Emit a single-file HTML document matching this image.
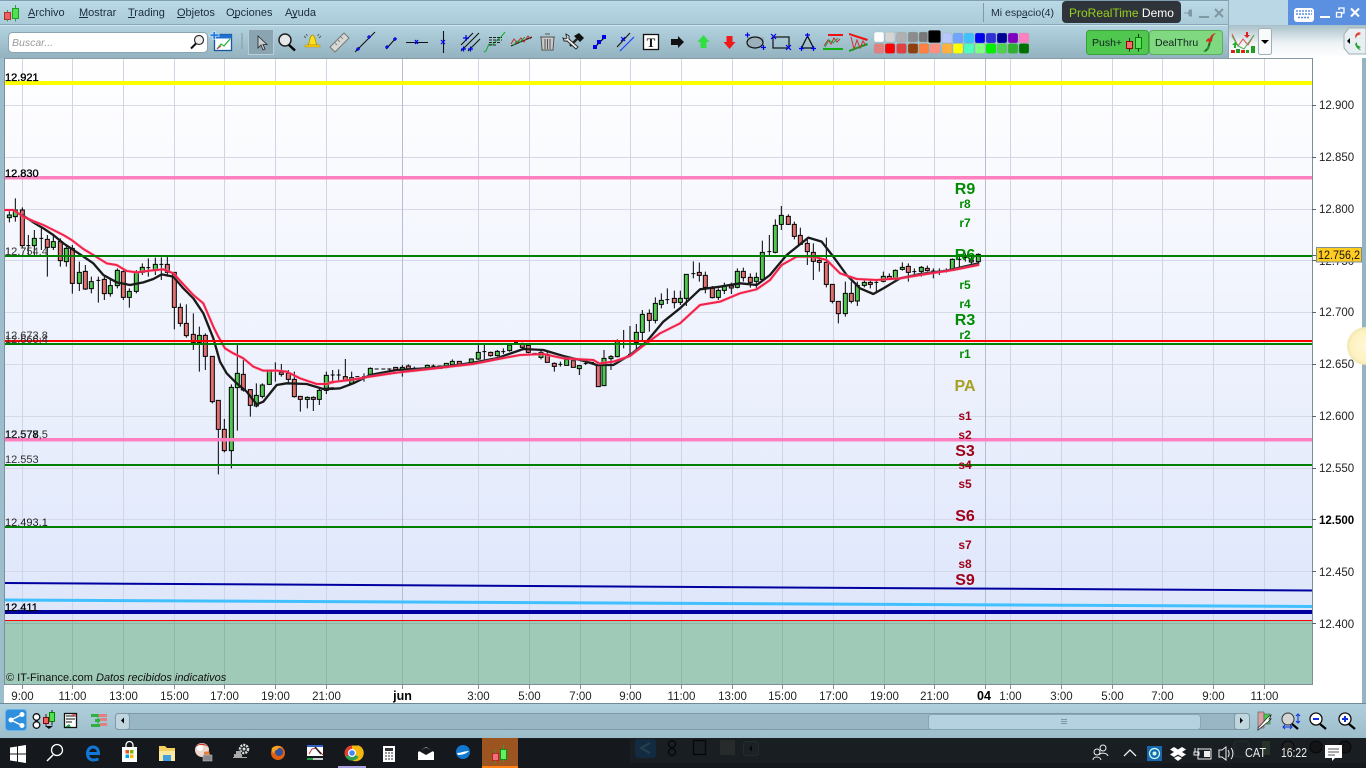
<!DOCTYPE html>
<html><head><meta charset="utf-8"><title>ProRealTime</title>
<style>
html,body{margin:0;padding:0;background:#15191e;overflow:hidden}
svg{display:block;position:absolute;left:0;top:0}
text{font-family:"Liberation Sans",sans-serif}
</style></head><body>
<svg width="1366" height="768" viewBox="0 0 1366 768" xmlns="http://www.w3.org/2000/svg">
<defs>
<linearGradient id="chart" x1="0" y1="0" x2="0" y2="1"><stop offset="0" stop-color="#ffffff"/><stop offset="1" stop-color="#dee6fb"/></linearGradient>
<linearGradient id="bar1" x1="0" y1="0" x2="0" y2="1"><stop offset="0" stop-color="#bcdae7"/><stop offset="1" stop-color="#a9cad8"/></linearGradient>
<linearGradient id="bar2" x1="0" y1="0" x2="0" y2="1"><stop offset="0" stop-color="#b5d4e1"/><stop offset="1" stop-color="#93b3c1"/></linearGradient>
<linearGradient id="bar3" x1="0" y1="0" x2="0" y2="1"><stop offset="0" stop-color="#b0d0dd"/><stop offset="1" stop-color="#9dbdcb"/></linearGradient>
<linearGradient id="white2" x1="0" y1="0" x2="0" y2="1"><stop offset="0" stop-color="#a8c0ca"/><stop offset=".55" stop-color="#eef3f5"/><stop offset="1" stop-color="#ffffff"/></linearGradient>
<radialGradient id="orb"><stop offset="0" stop-color="#fff8d8"/><stop offset=".8" stop-color="#fdf2c0"/><stop offset="1" stop-color="#f0e6b0"/></radialGradient>
</defs>

<!-- window frame -->
<rect x="0" y="0" width="1366" height="738" fill="#a5c6d4"/>
<rect x="0" y="0" width="1229" height="25" fill="url(#bar1)"/>
<rect x="0" y="0" width="1366" height="1" fill="#7f9fb0"/>
<rect x="1229" y="0" width="60" height="25" fill="#b9d7e4"/>
<rect x="1288" y="0" width="78" height="25" fill="#5b8fe0"/>
<rect x="1229" y="25" width="137" height="33" fill="url(#white2)"/>
<rect x="0" y="25" width="1229" height="33" fill="url(#bar2)"/>
<rect x="0" y="24" width="1229" height="1" fill="#88a8b8"/>
<rect x="0" y="25" width="1229" height="1" fill="#d0e6ef"/>
<rect x="1228" y="0" width="1" height="59" fill="#8fa6b2"/>

<!-- chart bg -->
<rect x="0" y="58" width="4" height="646" fill="#9cbecc"/>
<rect x="4" y="58" width="1308" height="563" fill="url(#chart)"/>
<rect x="4" y="621" width="1308" height="63" fill="#a0cab8"/>
<rect x="1312" y="58" width="50" height="646" fill="#ffffff"/>
<rect x="1362" y="58" width="4" height="646" fill="#94b4c3"/>
<rect x="4" y="684" width="1358" height="19" fill="#fff"/>
<rect x="4" y="58" width="1308" height="1" fill="#8a9aa5"/>
<rect x="4" y="58" width="1" height="627" fill="#7d8f9b"/>
<rect x="1312" y="58" width="1" height="627" fill="#7d8f9b"/>
<rect x="4" y="684" width="1308" height="1" fill="#7d8f9b"/>

<!-- grid -->
<g stroke="#d6dae8" stroke-width="1" fill="none">
<path d="M5 105.500H1312M5 157.500H1312M5 209.500H1312M5 260.500H1312M5 312.500H1312M5 364.500H1312M5 416.500H1312M5 468.500H1312M5 519.500H1312M5 571.500H1312"/>
<path stroke="#d0d5e5" d="M22.500 59V621M72.500 59V621M123.500 59V621M174.500 59V621M224.500 59V621M275.500 59V621M326.500 59V621M478.500 59V621M529.500 59V621M580.500 59V621M630.500 59V621M681.500 59V621M732.500 59V621M782.500 59V621M833.500 59V621M884.500 59V621M934.500 59V621M1010.500 59V621M1061.500 59V621M1112.500 59V621M1162.500 59V621M1213.500 59V621M1264.500 59V621"/>
<path stroke="#b6bdd2" d="M402.500 59V621M985.500 59V621"/>
<path stroke="#8fb6a6" d="M22.500 621V684M72.500 621V684M123.500 621V684M174.500 621V684M224.500 621V684M275.500 621V684M326.500 621V684M402.500 621V684M478.500 621V684M529.500 621V684M580.500 621V684M630.500 621V684M681.500 621V684M732.500 621V684M782.500 621V684M833.500 621V684M884.500 621V684M934.500 621V684M985.500 621V684M1010.500 621V684M1061.500 621V684M1112.500 621V684M1162.500 621V684M1213.500 621V684M1264.500 621V684"/>
<path stroke="#8fb6a6" d="M5 623.500H1312"/>
<path stroke="#7d8f9b" d="M22.500 685V689M72.500 685V689M123.500 685V689M174.500 685V689M224.500 685V689M275.500 685V689M326.500 685V689M402.500 685V689M478.500 685V689M529.500 685V689M580.500 685V689M630.500 685V689M681.500 685V689M732.500 685V689M782.500 685V689M833.500 685V689M884.500 685V689M934.500 685V689M985.500 685V689M1010.500 685V689M1061.500 685V689M1112.500 685V689M1162.500 685V689M1213.500 685V689M1264.500 685V689"/>
<path stroke="#55656f" d="M1312 105.500h4M1312 157.500h4M1312 209.500h4M1312 260.500h4M1312 312.500h4M1312 364.500h4M1312 416.500h4M1312 468.500h4M1312 519.500h4M1312 571.500h4M1312 623.500h4M1312 255.500h4"/>
</g>

<!-- Candles part 1 -->
<g transform="translate(0 195) scale(.33333)" stroke="#000" stroke-width="3" fill="none">
<path d="M28 42V82M46 10V80M67 37V160M85 120V180M79 152h12M103 105V180M124 100V165M118 130h12M142 120V245M160 120V165M181 130V215M199 150V215M217 150V296M238 200V288M256 210V285M274 245V295M295 245V323M289 256h12M313 245V315M331 250V305M352 220V280M370 225V315M388 280V338M409 225V295M427 205V240M445 190V245M439 218h12M466 188V240M484 187V255M478 208h12M502 186V245M523 232V403M541 325V395M559 328V428M580 355V465M598 395V530M616 415V525M637 485V625M655 616V838M673 672V772M694 568V820M712 450V707M730 495V590M751 584V665M769 565V637M787 565V610M808 525V570M826 502V560M820 528h12M844 507V545M865 525V568M883 530V608M901 604V650M922 604V640M940 604V648M958 580V630M979 530V597"/>
<path fill="#50c850" d="M22 60h12v8h-12zM40 45h12v20h-12zM97 130h12v22h-12zM154 140h12v17h-12zM193 160h12v40h-12zM232 232h12v33h-12zM268 260h12v21h-12zM325 272h12v24h-12zM346 226h12v46h-12zM382 289h12v18h-12zM403 233h12v56h-12zM421 217h12v15h-12zM460 208h12v16h-12zM592 421h12v21h-12zM688 577h12v190h-12zM706 535h12v43h-12zM763 601h12v32h-12zM781 570h12v34h-12zM802 526h12v42h-12zM916 607h12v6h-12zM952 586h12v27h-12zM973 541h12v45h-12z"/>
<path fill="#e07070" d="M61 45h12v107h-12zM136 133h12v24h-12zM175 140h12v57h-12zM211 160h12v105h-12zM250 229h12v53h-12zM307 253h12v43h-12zM364 230h12v77h-12zM496 208h12v24h-12zM517 232h12v105h-12zM535 337h12v48h-12zM553 385h12v37h-12zM574 418h12v24h-12zM610 421h12v63h-12zM631 484h12v136h-12zM649 616h12v87h-12zM667 703h12v64h-12zM724 538h12v47h-12zM745 584h12v47h-12zM838 532h12v6h-12zM859 535h12v18h-12zM877 553h12v52h-12zM895 604h12v9h-12zM934 607h12v6h-12z"/>
</g>
<!-- Candles part 2 -->
<g transform="translate(330 330) scale(.33333)" stroke="#000" stroke-width="3" fill="none">
<path d="M8 120V155M2 135h12M26 118V155M20 135h12M46 87V155M65 125V162M76 140h12M96 140h12M102 130V155M121 112V140M134 117h12M154 117h12M172 117h12M178 115V122M217 105V140M235 103V122M247 115h12M253 110V120M266 115h12M292 104V120M304 108h12M310 103V115M349 100V115M367 88V108M388 94V110M399 104h12M424 85V104M445 45V90M457 65h12M463 45V88M482 65V80M502 60V80M514 65h12M520 55V72M539 45V65M552 38h12M577 38V55M595 42V70M608 70h12M633 60V88M652 65V97M673 97V125M685 103h12M691 95V110M748 105V135M761 100h12M767 95V105M780 97h12M805 95V170"/>
<path fill="#50c850" d="M59 143h12v17h-12zM115 115h12v23h-12zM211 112h12v10h-12zM286 106h12v10h-12zM324 108h12v7h-12zM343 100h12v12h-12zM361 94h12v10h-12zM418 87h12v15h-12zM439 67h12v20h-12zM496 64h12v13h-12zM533 45h12v17h-12zM627 67h12v15h-12zM704 89h12v17h-12zM742 107h12v9h-12z"/>
<path fill="#e07070" d="M40 140h12v12h-12zM191 112h12v9h-12zM229 108h12v11h-12zM382 94h12v12h-12zM476 67h12v10h-12zM571 43h12v9h-12zM589 46h12v21h-12zM646 73h12v24h-12zM667 100h12v9h-12zM724 92h12v20h-12zM799 107h12v63h-12z"/>
</g>
<!-- Candles part 3 -->
<g transform="translate(600 200) scale(.33333)" stroke="#000" stroke-width="3" fill="none">
<path d="M12 450V558M33 465V510M52 418V472M71 390V445M90 378V470M84 463h12M109 372V452M127 330V425M148 328V395M166 292V370M184 280V325M202 265V312M196 299h12M223 272V325M241 272V315M259 222V318M280 184V235M274 221h12M298 188V245M316 215V280M337 258V295M355 265V300M373 248V282M394 248V282M412 205V265M430 203V245M451 220V263M469 218V265M487 122V240M508 105V170M502 155h12M526 58V160M544 18V90M565 43V75M583 65V118M601 83V135M622 118V195M640 130V240M658 165V215M679 113V262M697 253V310M715 304V370M736 245V350M754 245V310M772 245V318M793 237V262M811 237V265M829 240V280M823 247h12M850 215V247M868 220V240M886 208V240M907 187V212M925 190V245M943 205V230M937 215h12M964 198V230M982 197V215M1000 205V235M994 213h12M1018 205V225M1012 213h12M1039 205V218M1033 211h12M1057 175V210M1078 165V205M1072 178h12M1096 160V185M1090 172h12M1114 165V195M1135 160V190"/>
<path fill="#50c850" d="M6 475h12v82h-12zM27 470h12v6h-12zM46 425h12v45h-12zM103 397h12v30h-12zM121 343h12v54h-12zM160 310h12v51h-12zM178 301h12v12h-12zM235 295h12v12h-12zM253 223h12v72h-12zM349 271h12v21h-12zM367 258h12v13h-12zM406 214h12v48h-12zM463 232h12v12h-12zM481 157h12v81h-12zM520 76h12v81h-12zM538 46h12v27h-12zM730 280h12v61h-12zM766 256h12v47h-12zM787 247h12v9h-12zM844 229h12v15h-12zM880 211h12v24h-12zM901 202h12v6h-12zM958 202h12v12h-12zM1051 178h12v30h-12zM1108 180h12v6h-12zM1129 163h12v22h-12z"/>
<path fill="#e07070" d="M142 340h12v21h-12zM217 295h12v13h-12zM292 217h12v9h-12zM310 226h12v36h-12zM331 265h12v28h-12zM388 258h12v6h-12zM424 214h12v19h-12zM445 232h12v15h-12zM559 49h12v24h-12zM577 73h12v36h-12zM595 106h12v27h-12zM616 130h12v25h-12zM634 157h12v27h-12zM652 181h12v6h-12zM673 187h12v66h-12zM691 253h12v51h-12zM709 304h12v37h-12zM748 280h12v24h-12zM805 247h12v6h-12zM862 229h12v9h-12zM919 199h12v18h-12zM976 205h12v7h-12z"/>
</g>

<!-- Moving averages -->
<g fill="none" stroke-linejoin="round" stroke-linecap="round" stroke-width="6">
<g transform="translate(0 195) scale(.33333)">
<polyline stroke="#1a1a1a" stroke-width="7" points="67,60 100,82 130,100 160,120 190,145 240,178 280,205 310,240 350,262 390,270 430,262 460,252 485,238 520,245 550,280 580,310 610,355 640,430 660,500 680,535 710,565 740,590 770,628 790,620 830,570 860,565 920,567 970,582 1000,580"/>
<polyline stroke="#f8a0b0" stroke-width="10" opacity=".4" points="15,45 40,45 70,65 100,78 130,90 160,105 190,120 215,135 250,162 285,183 320,205 350,210 380,228 410,232 450,227 490,223 520,235 550,268 580,300 610,325 640,395 655,425 675,460 700,475 730,490 760,515 790,527 830,527 860,530 900,550 950,567 980,567 1000,562"/>
<polyline stroke="#f5204a" points="15,45 40,45 70,65 100,78 130,90 160,105 190,120 215,135 250,162 285,183 320,205 350,210 380,228 410,232 450,227 490,223 520,235 550,268 580,300 610,325 640,395 655,425 675,460 700,475 730,490 760,515 790,527 830,527 860,530 900,550 950,567 980,567 1000,562"/>
</g>
<g transform="translate(330 330) scale(.33333)">
<polyline stroke="#1a1a1a" stroke-width="7" points="0,177 30,175 70,160 120,135 200,120 290,115 360,108 430,98 500,85 580,57 640,60 700,78 770,95 800,105 810,105"/>
<polyline stroke="#f8a0b0" stroke-width="10" opacity=".4" points="0,157 60,150 120,140 200,128 290,118 360,110 430,102 500,88 570,75 640,72 700,85 790,90 810,102"/>
<polyline stroke="#f5204a" points="0,157 60,150 120,140 200,128 290,118 360,110 430,102 500,88 570,75 640,72 700,85 790,90 810,102"/>
</g>
<g transform="translate(600 200) scale(.33333)">
<polyline stroke="#1a1a1a" stroke-width="7" points="0,495 40,495 90,465 140,425 190,365 240,325 300,268 360,260 420,250 470,255 510,225 560,165 625,113 665,125 700,170 740,225 780,265 820,282 850,265 900,235 960,222 1040,212 1135,190"/>
<polyline stroke="#f8a0b0" stroke-width="10" opacity=".4" points="0,490 40,485 90,468 130,437 180,400 240,370 300,315 360,305 420,280 470,268 510,240 545,195 590,170 640,170 680,180 720,220 770,237 830,240 900,235 980,222 1060,210 1135,195"/>
<polyline stroke="#f5204a" points="0,490 40,485 90,468 130,437 180,400 240,370 300,315 360,305 420,280 470,268 510,240 545,195 590,170 640,170 680,180 720,220 770,237 830,240 900,235 980,222 1060,210 1135,195"/>
</g>
</g>

<!-- Horizontal levels -->
<rect x="5" y="81" width="1307" height="4" fill="#ffff00"/>
<rect x="5" y="176" width="1307" height="3.500" fill="#ff80c0"/>
<rect x="5" y="255" width="1307" height="2" fill="#008000"/>
<rect x="5" y="340" width="1307" height="2" fill="#ff0000"/>
<rect x="5" y="343" width="1307" height="2" fill="#008000"/>
<rect x="5" y="438" width="1307" height="3.500" fill="#ff80c0"/>
<rect x="5" y="464" width="1307" height="2" fill="#008000"/>
<rect x="5" y="526" width="1307" height="2" fill="#008000"/>
<line x1="5" y1="583" x2="1312" y2="590.500" stroke="#0000a0" stroke-width="2"/>
<line x1="5" y1="600" x2="1312" y2="606.500" stroke="#40c0ff" stroke-width="3"/>
<rect x="5" y="610" width="1307" height="4" fill="#0000a0"/>
<rect x="5" y="620" width="1307" height="1" fill="#ff0000"/>

<!-- level labels left -->
<g font-size="11" fill="#222">
<text x="5" y="81" stroke="#000" stroke-width=".35" fill="#000">12.921</text>
<text x="5" y="177" stroke="#000" stroke-width=".35" fill="#000">12.830</text>
<text x="5" y="255" fill="#444">12.754,4</text>
<text x="5" y="255" fill="#444">12.7</text>
<text x="5" y="339" fill="#333">12.673,8</text>
<text x="5" y="343" fill="#333">12.666,4</text>
<text x="5" y="438" stroke="#000" stroke-width=".3" fill="#000">12.578</text>
<text x="5" y="438" fill="#333">12.577,5</text>
<text x="5" y="463" fill="#333">12.553</text>
<text x="5" y="526" fill="#222">12.493,1</text>
<text x="5" y="611" fill="#000" stroke="#000" stroke-width=".3">12.411</text>
</g>

<!-- Pivot labels -->
<g text-anchor="middle" font-weight="bold" font-size="12">
<g fill="#008c00">
<text x="965" y="194" font-size="16">R9</text>
<text x="965" y="208">r8</text>
<text x="965" y="227">r7</text>
<text x="965" y="260" font-size="16">R6</text>
<text x="965" y="289">r5</text>
<text x="965" y="308">r4</text>
<text x="965" y="325" font-size="16">R3</text>
<text x="965" y="339">r2</text>
<text x="965" y="358">r1</text>
</g>
<text x="965" y="391" font-size="16" fill="#a8a020">PA</text>
<g fill="#a00018">
<text x="965" y="420">s1</text>
<text x="965" y="439">s2</text>
<text x="965" y="456" font-size="16">S3</text>
<text x="965" y="469">s4</text>
<text x="965" y="488">s5</text>
<text x="965" y="521" font-size="16">S6</text>
<text x="965" y="549">s7</text>
<text x="965" y="568">s8</text>
<text x="965" y="585" font-size="16">S9</text>
</g>
</g>

<!-- Price axis -->
<g font-size="11.5" fill="#222">
<text x="1319" y="109">12.900</text><text x="1319" y="161">12.850</text><text x="1319" y="213">12.800</text><text x="1319" y="265">12.750</text><text x="1319" y="316">12.700</text><text x="1319" y="368">12.650</text><text x="1319" y="420">12.600</text><text x="1319" y="472">12.550</text><text x="1319" y="524" font-weight="bold" fill="#000">12.500</text><text x="1319" y="576">12.450</text><text x="1319" y="628">12.400</text>
</g>
<rect x="1316.500" y="247.500" width="45" height="14.500" fill="#ffcc20" stroke="#7d8f9b"/>
<text x="1318" y="259" font-size="11.5" fill="#111" textLength="42" lengthAdjust="spacingAndGlyphs">12.756,2</text>
<circle cx="1366" cy="346" r="19" fill="url(#orb)"/>

<!-- Time axis -->
<g font-size="11.5" text-anchor="middle" fill="#222">
<text x="22.500" y="700">9:00</text><text x="72.500" y="700">11:00</text><text x="123.500" y="700">13:00</text><text x="174.500" y="700">15:00</text><text x="224.500" y="700">17:00</text><text x="275.500" y="700">19:00</text><text x="326.500" y="700">21:00</text>
<text x="402.500" y="700" font-weight="bold" font-size="12.500" fill="#000">jun</text>
<text x="478.500" y="700">3:00</text><text x="529.500" y="700">5:00</text><text x="580.500" y="700">7:00</text><text x="630.500" y="700">9:00</text><text x="681.500" y="700">11:00</text><text x="732.500" y="700">13:00</text><text x="782.500" y="700">15:00</text><text x="833.500" y="700">17:00</text><text x="884.500" y="700">19:00</text><text x="934.500" y="700">21:00</text>
<text x="984" y="700" font-weight="bold" font-size="12.500" fill="#000">04</text>
<text x="1010.500" y="700">1:00</text><text x="1061.500" y="700">3:00</text><text x="1112.500" y="700">5:00</text><text x="1162.500" y="700">7:00</text><text x="1213.500" y="700">9:00</text><text x="1264.500" y="700">11:00</text>
</g>
<text x="6" y="681" font-size="11" fill="#111">© IT-Finance.com</text>
<text x="96" y="681" font-size="11" font-style="italic" fill="#111">Datos recibidos indicativos</text>

<!-- Menu -->
<rect x="4.500" y="12.500" width="6" height="7" fill="#f06060" stroke="#b03030"/>
<rect x="12.500" y="8.500" width="6" height="10" fill="#50e050" stroke="#20a020"/>
<path d="M7.500 10v2.500M7.500 19.500v2M15.500 5v3.500M15.500 18.500v3" stroke="#30a030"/>
<g font-size="11" fill="#1c2c3c">
<text x="28" y="16">Archivo</text><text x="79" y="16">Mostrar</text><text x="128" y="16">Trading</text><text x="177" y="16">Objetos</text><text x="226" y="16">Opciones</text><text x="285" y="16">Ayuda</text>
</g>
<path d="M28 17.500h7M79 17.500h9M128 17.500h7M177 17.500h8M233 17.500h6M291 17.500h6" stroke="#1c2c3c"/>

<!-- Search -->
<rect x="8.500" y="32.500" width="199" height="20" rx="4" fill="#fff" stroke="#8aa4b0"/>
<text x="12" y="46" font-size="10.500" font-style="italic" fill="#9a9a9a">Buscar...</text>
<circle cx="199" cy="40" r="4.500" fill="#f0f0f0" stroke="#333" stroke-width="1.200"/>
<path d="M196 43.500l-5 5" stroke="#111" stroke-width="2"/>
<!-- new chart -->
<rect x="214.500" y="34.500" width="17" height="16" fill="#fff" stroke="#1858a0" stroke-width="1.300"/>
<rect x="214.500" y="34.500" width="17" height="4" fill="#2070d0"/>
<path d="M217 49l4-5 3 2 6-7" stroke="#20b030" fill="none" stroke-width="1.200"/>
<path d="M217 49l4-3" stroke="#e03030" fill="none"/>
<path d="M216 33h-3.500v-2.500h-2.500v2.500h-3v2.500h3v3h2.500v-3h3.500z" transform="translate(3 1)" fill="#2080e0" stroke="#fff" stroke-width=".6"/>
<rect x="241.500" y="33" width="1" height="16" fill="#7f9aa6"/>
<!-- selected tool -->
<rect x="248.500" y="29.500" width="25" height="25" fill="#8ba4b2" stroke="#b8cfda"/>
<path d="M258 36v12l3-3 2 5 2-1-2-4.500h4z" fill="#c8d0d4" stroke="#222" stroke-width=".8"/>
<!-- magnifier -->
<circle cx="285" cy="40" r="6" fill="#e8e8e8" stroke="#222" stroke-width="1.500"/>
<path d="M289 45l6 5.500" stroke="#000" stroke-width="2.400"/>
<!-- bell -->
<path d="M308 45c2-2 1-9 4.500-10 3.500 1 2.500 8 4.500 10z" fill="#ffe020" stroke="#b09000" stroke-width=".8"/>
<rect x="305" y="45" width="15" height="2" fill="#ffd000" stroke="#a08000" stroke-width=".4"/>
<path d="M304 36l2 2M321 36l-2 2M306 34l1.500 2M319 34l-1.500 2" stroke="#555" stroke-width=".9"/>
<!-- ruler -->
<path d="M330 47l14-14 5 5-14 14z" fill="#d8d8d4" stroke="#777"/>
<path d="M335 43l2 2M338 40l2 2M341 37l2 2" stroke="#888"/>
<!-- lines -->
<g stroke="#111" stroke-width="1.100" fill="none">
<path d="M355 52l20-20"/><path d="M386 49l10-11"/><path d="M406 42.500h22"/><path d="M443.500 31v22"/>
<path d="M461 45l12-12M461 51l18-18M468 51l12-12"/>
<path d="M511 46l21-9"/>
</g>
<g stroke="#0000f0" stroke-width="1.200" fill="none">
<path d="M356 49h4M358 47v4M367 37h4M369 35v4M385 47h4M387 45v4M393 39h4M395 37v4M415 40l3 4M418 40l-3 4M441 40l4 4M445 40l-4 4M463 38h6M466 35v6M461 49h5M463.500 46.500v5M468 49h5M470.500 46.500v5"/>
</g>
<!-- fib -->
<path d="M484 52l2-1 3-7 3 1 4-4 5-4 4-5" stroke="#10b030" fill="none" stroke-width="1.100"/>
<path d="M489 37.500h13M489 40h13M489 42.500h11M489 45h8" stroke="#222" stroke-width="1" stroke-dasharray="3 1"/>
<path d="M511 44l3-5 3 4 4-5 3 4 4-6 3 3" stroke="#c03030" fill="none"/>
<path d="M513 46l4-5 3 1 5-5" stroke="#20a030" fill="none"/>
<!-- trash -->
<path d="M541 37h13l-1 13h-11z" fill="#c8c8c8" stroke="#555"/>
<path d="M540 37h15M545 34h5M545 39v10M547.500 39v10M550 39v10" stroke="#555"/>
<!-- tools -->
<path d="M570 46l7-7" stroke="#222" stroke-width="2.400"/>
<path d="M574 36l5-3 5 5-4 4z" fill="#111"/>
<path d="M566 34l3 2 0 3 9 8-2 2-9-8-3 0-1-3 2 1 2-1-1-3z" fill="#f0f0f0" stroke="#222" stroke-width=".9"/>
<!-- blue line -->
<path d="M595 47l10-10" stroke="#000" stroke-width="1.200"/>
<path d="M593 45h4v4h-4zM602 35h4v4h-4zM597 40h4v4h-4z" fill="#0000f0"/>
<path d="M620 51l14-14" stroke="#2040ff" stroke-width="1.200"/><path d="M617 47l13-14" stroke="#111" stroke-width="1.100"/>
<path d="M621 37l4 4M625 37l-4 4" stroke="#0000f0"/>
<!-- T -->
<rect x="643.500" y="34.500" width="15" height="15" fill="#fff" stroke="#111" stroke-width="1.300"/>
<text x="651" y="47" font-size="13" font-weight="bold" text-anchor="middle" style="font-family:'Liberation Serif',serif" fill="#111">T</text>
<!-- arrows -->
<path d="M671 39h7v-3l6 6-6 6v-3h-7z" fill="#111"/>
<path d="M703.500 35l6 7h-3v6h-6v-6h-3z" fill="#30e040"/>
<path d="M729.500 49l6-7h-3v-6h-6v6h-3z" fill="#f01818"/>
<!-- shapes -->
<rect x="747" y="37" width="17" height="11" fill="#9ab0bc"/>
<ellipse cx="755" cy="42.500" rx="8" ry="5.500" fill="none" stroke="#111" stroke-width="1.200"/>
<path d="M745 35h5M747.500 32.500v5M761 47.500h5M763.500 45v5" stroke="#0000f0" stroke-width="1.200"/>
<rect x="773" y="37" width="16" height="11" fill="none" stroke="#111" stroke-width="1.200"/>
<path d="M771 34l5 5M776 34l-5 5M786 45l5 5M791 45l-5 5" stroke="#0000f0" stroke-width="1.200"/>
<path d="M807.500 36l-6 12h12z" fill="none" stroke="#111" stroke-width="1.300"/>
<path d="M805 35h5M807.500 33v5M799 48.500h5M801.500 46v5M811 48.500h5M813.500 46v5" stroke="#0000f0" stroke-width="1.200"/>
<rect x="828" y="34" width="15" height="2" fill="#f01010"/><rect x="823" y="48" width="20" height="2" fill="#10b010"/>
<path d="M824 46l4-6 3 4 3-6 3 4 3-3" stroke="#c03030" fill="none"/><path d="M825 47l4-7 4 3 5-5" stroke="#20a030" fill="none"/>
<path d="M849 33l19 6-1 2-18-6z" fill="#f01010"/><path d="M849 52l19-7-1-2-18 7z" fill="#10a020"/>
<path d="M851 37l3 12 3-9 3 8 3-7 3 5" stroke="#d03030" fill="none"/>

<!-- swatches -->
<g stroke="#8aa" stroke-width=".3">
<rect x="874" y="32" width="10" height="10" rx="2" fill="#ffffff"/><rect x="885" y="32" width="10" height="10" rx="2" fill="#d4d4d4"/><rect x="896.500" y="32" width="10" height="10" rx="2" fill="#b0b0b0"/><rect x="908" y="32" width="10" height="10" rx="2" fill="#8c8c8c"/><rect x="919" y="32" width="9" height="10" rx="2" fill="#787878"/>
<rect x="942" y="33" width="10" height="10" rx="2" fill="#b8c8ff"/><rect x="953" y="33" width="10" height="10" rx="2" fill="#70a4ff"/><rect x="964" y="33" width="10" height="10" rx="2" fill="#40c0ff"/><rect x="975" y="33" width="10" height="10" rx="2" fill="#0000f0"/><rect x="986" y="33" width="10" height="10" rx="2" fill="#3030d8"/><rect x="997" y="33" width="10" height="10" rx="2" fill="#000098"/><rect x="1008" y="33" width="10" height="10" rx="2" fill="#8000c0"/><rect x="1019" y="33" width="10" height="10" rx="2" fill="#ff80c0"/>
<rect x="874" y="43.500" width="10" height="10" rx="2" fill="#e08080"/><rect x="885" y="43.500" width="10" height="10" rx="2" fill="#ff0000"/><rect x="896.500" y="43.500" width="10" height="10" rx="2" fill="#e04040"/><rect x="908" y="43.500" width="10" height="10" rx="2" fill="#904010"/><rect x="919" y="43.500" width="10" height="10" rx="2" fill="#ff8040"/><rect x="930" y="43.500" width="10" height="10" rx="2" fill="#ff9080"/><rect x="942" y="43.500" width="10" height="10" rx="2" fill="#ffb040"/><rect x="953" y="43.500" width="10" height="10" rx="2" fill="#ffff00"/><rect x="964" y="43.500" width="10" height="10" rx="2" fill="#50ffc0"/><rect x="975" y="43.500" width="10" height="10" rx="2" fill="#80ff80"/><rect x="986" y="43.500" width="10" height="10" rx="2" fill="#00f000"/><rect x="997" y="43.500" width="10" height="10" rx="2" fill="#50d050"/><rect x="1008" y="43.500" width="10" height="10" rx="2" fill="#30b030"/><rect x="1019" y="43.500" width="10" height="10" rx="2" fill="#007000"/>
</g>
<rect x="928" y="30" width="13" height="13" rx="2" fill="#000" stroke="#bcd" stroke-width=".8"/>

<!-- Push / DealThru -->
<rect x="1086.500" y="30.500" width="62" height="24" rx="3" fill="#50c850" stroke="#38a038"/>
<rect x="1149.500" y="30.500" width="73" height="24" rx="3" fill="#80d880" stroke="#58b058"/>
<text x="1092" y="46" font-size="10.500" fill="#122">Push+</text>
<rect x="1126.500" y="41.500" width="6" height="7" fill="#f07070" stroke="#900"/>
<rect x="1135.500" y="37.500" width="6" height="11" fill="#60e060" stroke="#080"/>
<path d="M1129.500 38v3.500M1129.500 48.500v3M1138.500 34v3.500M1138.500 48.500v3" stroke="#222"/>
<text x="1155" y="46" font-size="10.500" fill="#122">DealThru</text>
<path d="M1210 41c-1 4-1 8-5 10" stroke="#206020" stroke-width="2" fill="none"/>
<path d="M1209 44c0-5 1-8 4-10l3-1-3 3-1 5z" fill="#c83020"/>
<path d="M1209 38c-2 1-3 2-3 4 2-1 4-1 4-1z" fill="#c83020"/>
<path d="M1210 45c-1 3-2 6-5 7l-2-1 4-1 0-3z" fill="#20903a"/>

<!-- Right toolbar pieces -->
<path d="M1232 34l6 12 5-7 5 6 6-10" stroke="#e05050" fill="none"/>
<path d="M1232 36l6 10 6 3 10-14" stroke="#50b050" fill="none"/>
<path d="M1234 48v-3h-2l3-3 3 3h-2v3z" fill="#20b030"/>
<path d="M1248 32v3h2l-3 3-3-3h2v-3z" fill="#e02020"/>
<rect x="1231" y="50" width="4" height="3" fill="#e02020"/><rect x="1236" y="49" width="4" height="4" fill="#20a020"/><rect x="1241" y="50" width="4" height="3" fill="#e02020"/><rect x="1246" y="50" width="3" height="3" fill="#20a020"/><rect x="1251" y="46" width="4" height="7" fill="#20a020"/>
<rect x="1258.500" y="28.500" width="13" height="26" rx="2" fill="#f8fafb" stroke="#a0b0b8"/>
<path d="M1261 40h8l-4 4z" fill="#000"/>
<path d="M1366 28h-17l-5 6v14l5 6h17z" fill="#e8eff2" stroke="#a0b0b8"/>
<path d="M1347 41l3-3v6z" fill="#000"/>
<path d="M1355 36c1-3 3-4 6-4l-2 1 2 1-2 1c-2 0-3 2-3 4z" fill="#e04030"/>
<path d="M1355 44c1 3 3 6 6 6l-2-2 2-1-2-1c-2 0-2-2-2-4z" fill="#20a030"/>

<!-- title bar right cluster -->
<rect x="983" y="3" width="1" height="19" fill="#7f9aa6"/>
<text x="991" y="16" font-size="10.500" fill="#1c2c3c">Mi espacio(4)</text>
<path d="M1022 17.500h5" stroke="#1c2c3c"/>
<rect x="1062" y="1" width="119" height="22" rx="4" fill="#2e3439"/>
<text x="1069" y="17" font-size="12"><tspan fill="#98d020">ProRealTime</tspan><tspan fill="#ffffff"> Demo</tspan></text>
<path d="M1184 12.500h4l1-3h3v7h-3l-1-3h-4z" fill="#8097a4"/>
<rect x="1199" y="16" width="10" height="2" fill="#8097a4"/>
<path d="M1215 9l8 8M1223 9l-8 8" stroke="#8097a4" stroke-width="2"/>
<rect x="1294" y="8" width="20" height="14" rx="3" fill="#fff"/>
<path d="M1296 11h16M1296 14h16M1298 17.500h12" stroke="#5b8fe0" stroke-width="1.400" stroke-dasharray="2 1"/>
<rect x="1320" y="16" width="10" height="2" fill="#fff"/>
<path d="M1336.500 12.500h5v4.500h-5zM1339 10v-2h5v5h-2" fill="none" stroke="#fff" stroke-width="1.300"/>
<path d="M1351 8.500l8 8M1359 8.500l-8 8" stroke="#fff" stroke-width="2"/>

<!-- Bottom toolbar -->
<rect x="0" y="703" width="1366" height="35" fill="url(#bar3)"/>
<rect x="0" y="703" width="1366" height="1" fill="#708a98"/>
<rect x="5.500" y="709.500" width="21" height="21" rx="3" fill="#2d8fdd" stroke="#6ab0e8"/>
<path d="M22 714.500l-11 5.500 11 5.500" stroke="#fff" stroke-width="1.500" fill="none"/>
<circle cx="11" cy="720" r="2.500" fill="#fff"/><circle cx="22" cy="714.500" r="2.500" fill="#fff"/><circle cx="22" cy="725.500" r="2.500" fill="#fff"/>
<circle cx="36.500" cy="717" r="3.300" fill="#fff" stroke="#111" stroke-width="1.300"/><circle cx="36.500" cy="725" r="3.300" fill="#fff" stroke="#111" stroke-width="1.300"/>
<path d="M35.500 719.500v3M37.500 719.500v3" stroke="#111"/>
<rect x="43.500" y="717.500" width="5" height="6" fill="#f06060" stroke="#800"/>
<rect x="49.500" y="712.500" width="5" height="9" fill="#50e050" stroke="#080"/>
<path d="M52 710v2.500M52 721.500v4M46 714v3.500M46 723.500v3" stroke="#222"/>
<path d="M45 726h8l-4 3z" fill="#111"/>
<rect x="64.500" y="713.500" width="12" height="14" fill="#fff" stroke="#111" stroke-width="1.300"/>
<path d="M66 716h9M66 719h9M66 722h6" stroke="#111"/><path d="M71 714h5v3z" fill="#e06060"/><path d="M65 727l4-3 2 3z" fill="#20a040"/>
<rect x="91" y="714" width="7" height="3" fill="#30b040"/><rect x="98" y="714" width="9" height="3" fill="#e08080"/><rect x="95" y="719" width="5" height="3" fill="#30b040"/><rect x="100" y="718" width="7" height="3" fill="#e08080"/><rect x="91" y="724" width="9" height="3" fill="#30b040"/><rect x="100" y="723" width="7" height="3" fill="#e08080"/><path d="M98 714v13" stroke="#30b040"/>
<!-- scrollbar -->
<rect x="115.500" y="713.500" width="1134" height="16" rx="3" fill="#98b6c4" stroke="#7f99a6"/>
<rect x="115.500" y="713.500" width="14" height="16" rx="3" fill="#c0d6df" stroke="#7f99a6"/>
<path d="M124 717.500v6l-3-3z" fill="#000"/>
<rect x="928.500" y="714.500" width="272" height="15" rx="3" fill="#b4d2df" stroke="#8aa6b2"/>
<path d="M1061 719.500h6M1061 721.500h6M1061 723.500h6" stroke="#7a98a6"/>
<rect x="1234.500" y="713.500" width="15" height="16" rx="3" fill="#c0d6df" stroke="#7f99a6"/>
<path d="M1240 717.500v6l3-3z" fill="#000"/>
<!-- bottom right icons -->
<rect x="1258" y="712" width="6" height="16" fill="#d8a0a0" stroke="#555" stroke-width=".6"/><rect x="1264" y="714" width="6" height="10" fill="#40d040" stroke="#555" stroke-width=".6"/>
<path d="M1258 728l10-11 3-2-1 3-1 1 2 0-3 3-10 8z" fill="#fff" stroke="#222" stroke-width=".8"/>
<circle cx="1288" cy="719" r="6" fill="#d4d4d4" stroke="#333"/><path d="M1292 724l6 5" stroke="#000" stroke-width="2.200"/>
<path d="M1298 714v9M1296 716l2-2 2 2M1296 721l2 2 2-2M1283 727h9M1285 725l-2 2 2 2M1290 725l2 2-2 2" stroke="#1030e0" fill="none"/>
<circle cx="1316" cy="719" r="6" fill="#fff" stroke="#111" stroke-width="1.300"/><path d="M1320 724l6 5" stroke="#000" stroke-width="2.200"/><path d="M1313 719h6" stroke="#1030e0" stroke-width="2"/>
<circle cx="1345" cy="719" r="6" fill="#fff" stroke="#111" stroke-width="1.300"/><path d="M1349 724l6 5" stroke="#000" stroke-width="2.200"/><path d="M1342 719h6M1345 716v6" stroke="#1030e0" stroke-width="2"/>

<!-- Taskbar -->
<rect x="0" y="738" width="1366" height="30" fill="#15191e"/>
<rect x="0" y="738" width="1366" height="1" fill="#1a2024"/>
<!-- ghost of app toolbar -->
<rect x="630" y="739" width="736" height="24" fill="#191e22"/>
<g opacity=".75">
<rect x="635" y="739" width="21" height="19" rx="3" fill="#12304a"/>
<path d="M650 743l-9 5 9 5" stroke="#2f4a5a" stroke-width="2" fill="none"/>
<circle cx="672" cy="744" r="3.500" fill="none" stroke="#000" stroke-width="1.300"/><circle cx="672" cy="752" r="3.500" fill="none" stroke="#000" stroke-width="1.300"/>
<rect x="693.500" y="740.500" width="12" height="14" fill="none" stroke="#000" stroke-width="1.300"/>
<rect x="720" y="740" width="15" height="15" fill="#2c3030"/>
<rect x="743.500" y="741.500" width="15" height="14" rx="3" fill="#1c2227" stroke="#2a3034"/>
<path d="M752 745.500v6l-3-3z" fill="#000"/>
<rect x="1234" y="741" width="15" height="16" rx="3" fill="#1c2227" stroke="#2a3034"/>
<circle cx="1288" cy="747" r="6" fill="#222" stroke="#000"/><circle cx="1316" cy="747" r="6" fill="#111" stroke="#000"/><circle cx="1345" cy="747" r="6" fill="#111" stroke="#000"/>
<rect x="1262" y="741" width="8" height="14" fill="#2a3a2a"/>
</g>
<!-- win -->
<path d="M10 747.500l7-1v7h-7zM18 746.300l8-1.300v8.500h-8zM10 754.500h7v7l-7-1zM18 754.500h8v8.500l-8-1.200z" fill="#fff"/>
<circle cx="57" cy="750" r="5.500" fill="none" stroke="#fff" stroke-width="1.300"/><path d="M53 755l-6 6" stroke="#fff" stroke-width="1.500"/>
<!-- edge -->
<path d="M87.500 753.500h11c0-4.500-2.500-6.500-5.500-6.500-3.500 0-5.500 3-5.500 6.500 0 4.500 2.500 6.500 6 6.500 2 0 3.500-.5 5-1" fill="none" stroke="#1078d8" stroke-width="3"/>
<!-- store -->
<rect x="122" y="747" width="15" height="15" fill="#fff"/><path d="M126 747v-2a3.500 3.500 0 0 1 7 0v2" stroke="#fff" fill="none" stroke-width="1.300"/>
<rect x="125.500" y="750" width="3.500" height="3.500" fill="#f25022"/><rect x="130" y="750" width="3.500" height="3.500" fill="#7fba00"/><rect x="125.500" y="754.500" width="3.500" height="3.500" fill="#00a4ef"/><rect x="130" y="754.500" width="3.500" height="3.500" fill="#ffb900"/>
<!-- folder -->
<path d="M159 746h6l2 2h8v13h-16z" fill="#f4d060"/><path d="M159 751h16v10h-16z" fill="#fce8a0"/><rect x="163" y="755" width="8" height="6" fill="#40a0e0"/>
<!-- ball -->
<circle cx="202" cy="750" r="7" fill="#f0d8d0"/><path d="M196 747a7 7 0 0 1 12 0 10 10 0 0 0-12 0z" fill="#d03020"/><circle cx="200" cy="748" r="3" fill="#fff"/><path d="M204 752c2-1 3 0 5-1l1 4-3 3-3-2z" fill="#e08040"/>
<rect x="203" y="755" width="9" height="6" fill="#888" stroke="#ccc" stroke-width=".5"/>
<!-- gear -->
<circle cx="244" cy="749" r="4" fill="none" stroke="#ddd" stroke-width="2.500" stroke-dasharray="2 1"/><circle cx="244" cy="749" r="1.500" fill="#ddd"/><path d="M234 754h8v3h-8zM236 751h5v3h-5zM233 757h14v1h-14z" fill="#aaa"/>
<!-- firefox -->
<circle cx="278" cy="753" r="7" fill="#e06010"/><circle cx="279" cy="752" r="4" fill="#3050a0"/><path d="M272 748c3-3 8-3 11 0-3-1-5 0-6 2-2 0-3 2-3 4-2-2-3-4-2-6z" fill="#f8a020"/>
<!-- tool -->
<rect x="307" y="745" width="16" height="11" fill="#fff"/><rect x="307" y="745" width="16" height="2" fill="#3060c0"/><path d="M309 754l3-5 4-1 7 7" stroke="#c03030" fill="none"/><path d="M315 747l6 7" stroke="#222" stroke-width="1.500"/><rect x="307" y="758" width="6" height="2" fill="#20a040"/><rect x="313" y="758" width="10" height="2" fill="#ccc"/>
<!-- chrome -->
<circle cx="352" cy="753" r="7.500" fill="#e04030"/><path d="M352 753l-6.500 3.800A7.500 7.500 0 0 0 352 760.500z" fill="#30a050"/><path d="M352 745.500h7a7.500 7.500 0 0 1-7 15z" fill="#fbc010" opacity=".95"/><path d="M352 753l6.500 3.800A7.500 7.500 0 0 1 349 760z" fill="#30a050"/><circle cx="352" cy="753" r="3.400" fill="#4285f4" stroke="#fff" stroke-width="1.200"/>
<rect x="338" y="766" width="28" height="2" fill="#a8a0e0"/>
<!-- calc -->
<rect x="383" y="746" width="12" height="16" fill="#fff"/><rect x="385" y="748" width="8" height="3" fill="#333"/><path d="M385 753h8M385 756h8M385 759h8" stroke="#333" stroke-dasharray="2 1"/>
<!-- mail -->
<path d="M418 752l8-5 8 5v8h-16z" fill="#fff"/><path d="M419 751l7-3.500 7 3.500-7 4z" fill="#15191e"/>
<!-- blue -->
<circle cx="463" cy="752" r="7" fill="#1078d0"/><path d="M457 753c4 0 7-2 12-2-3 3-7 4-11 4z" fill="#fff"/>
<!-- active -->
<rect x="482" y="738" width="36" height="28" fill="#9c5420"/>
<rect x="482" y="766" width="36" height="2" fill="#ff8010"/>
<rect x="492.500" y="753.500" width="6" height="7" fill="#f07080" stroke="#c02020"/>
<rect x="500.500" y="749.500" width="6" height="10" fill="#60f060" stroke="#109010"/>
<path d="M495.500 750v3.500M495.500 760.500v3M503.500 745v4.500M503.500 759.500v3" stroke="#409040"/>
<!-- tray -->
<circle cx="1103" cy="748" r="3" fill="none" stroke="#eee"/><circle cx="1097" cy="752" r="3" fill="none" stroke="#eee"/><path d="M1093 760c0-4 7-4 8 0M1099 755c2-3 8-2 9 1" fill="none" stroke="#eee"/>
<path d="M1124 756l6-6 6 6" fill="none" stroke="#eee" stroke-width="1.300"/>
<rect x="1147" y="746" width="15" height="15" fill="#1868b0"/><circle cx="1154.500" cy="753.500" r="5" fill="none" stroke="#cfe" stroke-width="1.200"/><circle cx="1154.500" cy="753.500" r="2" fill="#cfe"/>
<path d="M1174 747l4 2.500 4-2.500 4 2.500-4 2.500 4 2.500-4 2.500-4-2.500-4 2.500-4-2.500 4-2.500-4-2.500zM1174 758l4-2 4 2-4 3z" fill="#fff"/>
<rect x="1198" y="749" width="13" height="10" fill="none" stroke="#eee"/><rect x="1204" y="751" width="6" height="6" fill="#eee"/><path d="M1195 748v4M1198 748v4M1194 752h5v3h-5z" stroke="#eee" fill="none"/>
<path d="M1219 750h3l4-3v13l-4-3h-3z" fill="none" stroke="#eee"/><path d="M1228 750c1.500 2 1.500 5 0 7M1231 748c2.500 3 2.500 8 0 11" fill="none" stroke="#eee"/>
<text x="1245" y="757" font-size="13" fill="#f0f0f0" textLength="21" lengthAdjust="spacingAndGlyphs">CAT</text>
<text x="1281" y="757" font-size="13" fill="#f0f0f0" textLength="26" lengthAdjust="spacingAndGlyphs">16:22</text>
<path d="M1325 745h17v13h-7l-3 3v-3h-7z" fill="#fff"/><path d="M1328 749h11M1328 752h11M1328 755h7" stroke="#555"/>
</svg>
</body></html>
